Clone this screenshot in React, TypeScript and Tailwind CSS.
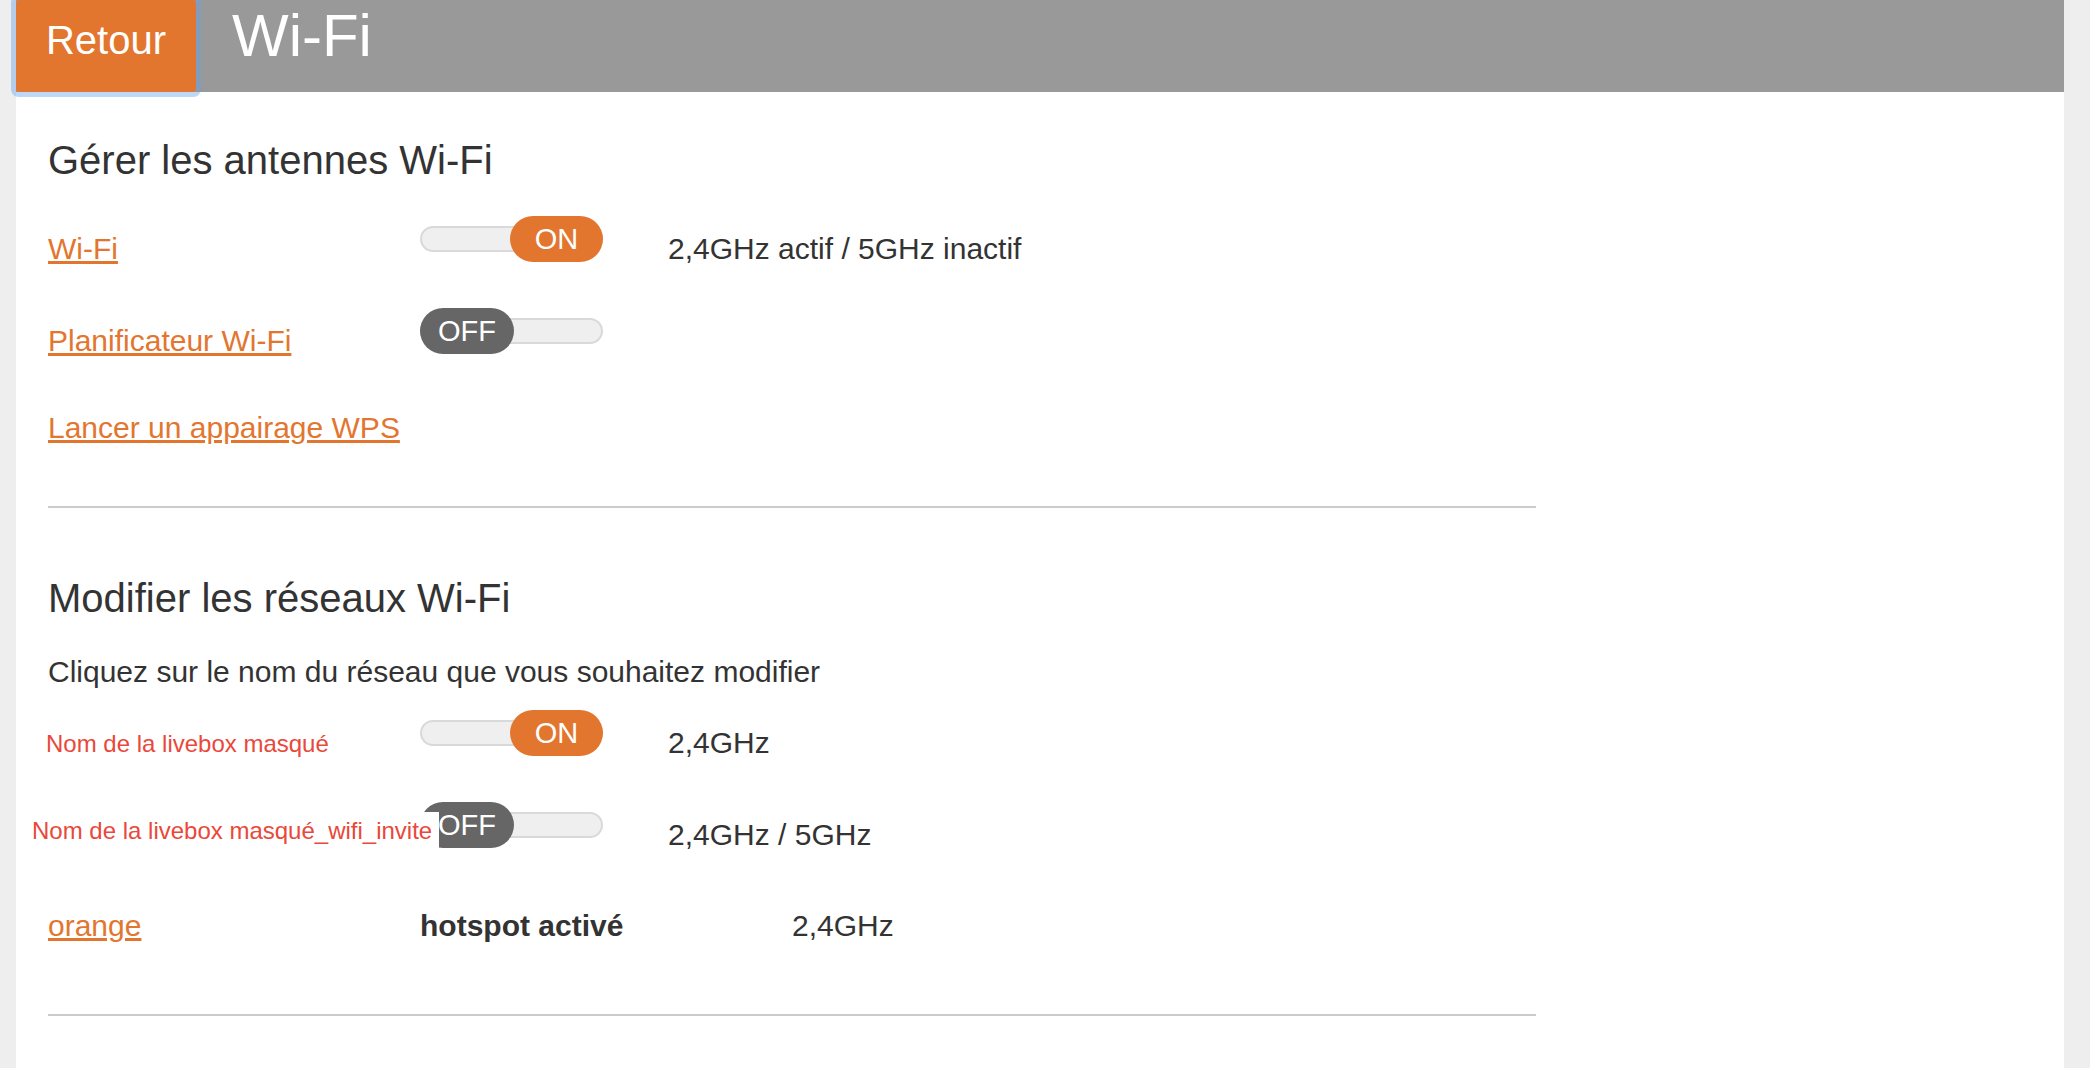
import React from "react";

function Toggle({ on }: { on: boolean }) {
  return (
    <div className="relative h-[46px] w-[183px]">
      <div className="absolute left-0 right-0 top-[10px] h-[26px] rounded-full border-2 border-[#d9d9d9] bg-[#efefef]" />
      {on ? (
        <div className="absolute right-0 top-0 flex h-[46px] w-[93px] items-center justify-center rounded-full bg-[#e3762f] pt-[1px] text-[29px] leading-none text-white">
          ON
        </div>
      ) : (
        <div className="absolute left-0 top-0 flex h-[46px] w-[94px] items-center justify-center rounded-full bg-[#666666] pt-[1px] text-[29px] leading-none text-white">
          OFF
        </div>
      )}
    </div>
  );
}

export default function App() {
  return (
    <div className="min-h-screen bg-[#eeeeee] font-['Liberation_Sans',Arial,sans-serif] text-[#333333]">
      <div className="ml-[16px] min-h-[1068px] w-[2048px] bg-white">
        <header className="flex h-[92px] bg-[#999999]">
          <button className="relative z-10 flex h-[92px] w-[180px] items-start justify-center rounded-[3px] bg-[#e3762f] pt-[20px] text-[40px] leading-[40px] text-white shadow-[0_0_0_5px_rgba(100,160,230,0.42)]">
            Retour
          </button>
          <h1 className="ml-[36px] pt-[6px] text-[60px] font-normal leading-[60px] text-white">
            Wi-Fi
          </h1>
        </header>

        <main className="w-[1520px] pl-[32px]">
          <h2 className="mt-[48px] text-[40px] leading-[40px]">Gérer les antennes Wi-Fi</h2>

          <div className="mt-[36px]">
            <div className="flex h-[92px]">
              <div className="w-[372px] pt-[18px] text-[30px] leading-[30px]">
                <a href="#" className="text-[#e3762f] underline">Wi-Fi</a>
              </div>
              <div className="w-[248px]">
                <Toggle on={true} />
              </div>
              <div className="pt-[18px] text-[30px] leading-[30px]">2,4GHz actif / 5GHz inactif</div>
            </div>

            <div className="flex h-[92px]">
              <div className="w-[372px] pt-[18px] text-[30px] leading-[30px]">
                <a href="#" className="text-[#e3762f] underline">Planificateur Wi-Fi</a>
              </div>
              <div className="w-[248px]">
                <Toggle on={false} />
              </div>
            </div>

            <div className="h-[106px] pt-[13px] text-[30px] leading-[30px]">
              <a href="#" className="text-[#e3762f] underline">Lancer un appairage WPS</a>
            </div>
          </div>

          <div className="h-[2px] bg-[#cbcbcb]" />

          <h2 className="mt-[70px] text-[40px] leading-[40px]">Modifier les réseaux Wi-Fi</h2>
          <p className="mt-[39px] text-[30px] leading-[30px]">
            Cliquez sur le nom du réseau que vous souhaitez modifier
          </p>

          <div className="mt-[23px]">
            <div className="flex h-[92px]">
              <div className="-ml-[2px] w-[374px] pt-[22px] text-[24px] leading-[24px] text-[#e9483a]">
                Nom de la livebox masqué
              </div>
              <div className="w-[248px]">
                <Toggle on={true} />
              </div>
              <div className="pt-[18px] text-[30px] leading-[30px]">2,4GHz</div>
            </div>

            <div className="relative flex h-[92px]">
              <div className="w-[372px]" />
              <div className="w-[248px]">
                <Toggle on={false} />
              </div>
              <div className="pt-[18px] text-[30px] leading-[30px]">2,4GHz / 5GHz</div>
              <div className="absolute left-[-18px] top-[10px] h-[40px] w-[409px] bg-white pl-[2px] pt-[7px] text-[24px] leading-[24px] text-[#e9483a]">
                Nom de la livebox masqué_wifi_invite
              </div>
            </div>

            <div className="flex h-[92px]">
              <div className="w-[372px] pt-[17px] text-[30px] leading-[30px]">
                <a href="#" className="text-[#e3762f] underline">orange</a>
              </div>
              <div className="w-[372px] pt-[17px] text-[30px] font-bold leading-[30px]">hotspot activé</div>
              <div className="pt-[17px] text-[30px] leading-[30px]">2,4GHz</div>
            </div>
          </div>

          <div className="mt-[28px] h-[2px] bg-[#cbcbcb]" />
        </main>
      </div>
    </div>
  );
}
